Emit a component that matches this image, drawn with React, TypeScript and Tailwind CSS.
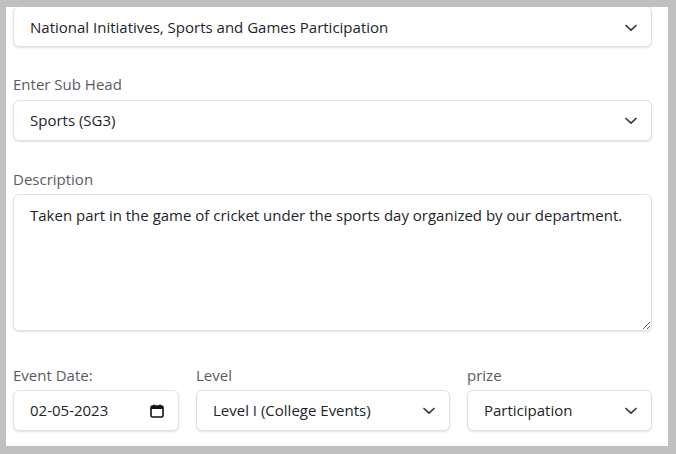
import type { ReactNode } from 'react';

function Chevron() {
  return (
    <svg width="12" height="8" viewBox="0 0 12 8" className="shrink-0">
      <path d="M1 1.5 L6 6.2 L11 1.5" fill="none" stroke="#343a40" strokeWidth="1.7" strokeLinecap="round" strokeLinejoin="round" />
    </svg>
  );
}

function CalendarIcon() {
  return (
    <svg width="14" height="14" viewBox="0 0 14 14" className="shrink-0">
      <rect x="1" y="2" width="12" height="11" rx="1.5" fill="none" stroke="#111" strokeWidth="1.6" />
      <rect x="1" y="2" width="12" height="3" fill="#111" />
      <line x1="4" y1="0.5" x2="4" y2="3" stroke="#111" strokeWidth="1.4" />
      <line x1="10" y1="0.5" x2="10" y2="3" stroke="#111" strokeWidth="1.4" />
    </svg>
  );
}

function FakeSelect({ value, className = '' }: { value: string; className?: string }) {
  return (
    <div className={`flex h-[41px] items-center justify-between rounded-md border border-[#dee2e6] bg-white pl-4 pr-[14px] text-[15px] text-[#212529] shadow-[0_1px_2px_rgba(0,0,0,0.12)] ${className}`}>
      <span className="truncate">{value}</span>
      <Chevron />
    </div>
  );
}

function Label({ children }: { children: ReactNode }) {
  return <div className="h-6 text-[15px] leading-6 text-[#595c5f]">{children}</div>;
}

export default function App() {
  return (
    <div className="h-[454px] w-[676px] bg-[#c0c0c0] pt-[7px] pl-[6px] pr-[8px] pb-[8px]" style={{ fontFamily: '"Open Sans", "Noto Sans", sans-serif' }}>
      <div className="h-full overflow-hidden bg-white pl-[7px] pr-[16px]">
        {/* Head (scrolled, top edge hidden) */}
        <FakeSelect value="National Initiatives, Sports and Games Participation" className="-mt-[1px] pt-[2px]" />

        <div className="mt-[25px]">
          <Label>Enter Sub Head</Label>
          <FakeSelect value="Sports (SG3)" className="mt-1" />
        </div>

        <div className="mt-[26px]">
          <Label>Description</Label>
          <textarea
            readOnly
            defaultValue="Taken part in the game of cricket under the sports day organized by our department."
            className="mt-[3px] block h-[137px] w-full rounded-md border border-[#dee2e6] bg-white px-4 py-[9px] text-[15px] leading-[22px] text-[#212529] shadow-[0_1px_2px_rgba(0,0,0,0.12)] outline-none"
          />
        </div>

        <div className="mt-[32px] flex gap-[17px]">
          <div className="w-[166px]">
            <Label>Event Date:</Label>
            <div className="mt-[3px] flex h-[41px] items-center justify-between rounded-md border border-[#dee2e6] bg-white pl-4 pr-[14px] text-[15px] text-[#212529] shadow-[0_1px_2px_rgba(0,0,0,0.12)]">
              <span>02-05-2023</span>
              <CalendarIcon />
            </div>
          </div>
          <div className="w-[254px]">
            <Label>Level</Label>
            <FakeSelect value="Level I (College Events)" className="mt-[3px]" />
          </div>
          <div className="flex-1">
            <Label>prize</Label>
            <FakeSelect value="Participation" className="mt-[3px]" />
          </div>
        </div>
      </div>
    </div>
  );
}
